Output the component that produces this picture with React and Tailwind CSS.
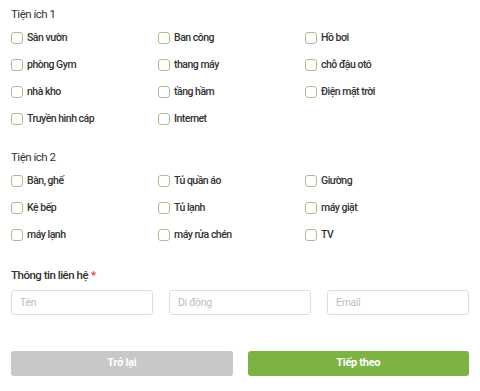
import React from 'react';

const GROUP_1 = [
  'Sân vườn', 'Ban công', 'Hồ bơi',
  'phòng Gym', 'thang máy', 'chỗ đậu otô',
  'nhà kho', 'tầng hầm', 'Điện mặt trời',
  'Truyền hình cáp', 'Internet',
];

const GROUP_2 = [
  'Bàn, ghế', 'Tủ quần áo', 'Giường',
  'Kệ bếp', 'Tủ lạnh', 'máy giặt',
  'máy lạnh', 'máy rửa chén', 'TV',
];

function Check({ label }) {
  return (
    <label className="h-[27px] flex items-center gap-[4px] cursor-pointer">
      <span className="w-[12px] h-[12px] rounded-[3px] border border-[#aebd8f] bg-white shrink-0" />
      <span className="text-[10.5px] text-[#333] font-medium tracking-[-0.5px]">{label}</span>
    </label>
  );
}

function Group({ title, items, className = '' }) {
  return (
    <div className={className}>
      <h3 className="h-[18px] flex items-center text-[11.5px] text-[#333] tracking-[-0.5px]">{title}</h3>
      <div className="grid grid-cols-[147px_147px_1fr]">
        {items.map(it => <Check key={it} label={it} />)}
      </div>
    </div>
  );
}

export default function App() {
  return (
    <div className="w-[480px] h-[391px] bg-white px-[11px] pt-[6px]" style={{ fontFamily: 'Roboto, "Noto Sans", sans-serif' }}>
      <Group title="Tiện ích 1" items={GROUP_1} />
      <Group title="Tiện ích 2" items={GROUP_2} className="mt-[17px]" />

      {/* contact */}
      <div className="mt-[19px]">
        <h3 className="h-[18px] flex items-center text-[11.5px] text-[#333] font-medium tracking-[-0.5px]">
          Thông tin liên hệ<span className="text-[#e53935] ml-[3px]">*</span>
        </h3>
        <div className="grid grid-cols-3 gap-4 mt-[5px]">
          {['Tên', 'Di động', 'Email'].map(p => (
            <input key={p} placeholder={p}
              className="h-[25px] rounded-[3px] border border-[#dcdcdc] px-[8px] text-[10.5px] tracking-[-0.3px] text-[#333] placeholder:text-[#bdbdbd] outline-none" />
          ))}
        </div>
      </div>

      <div className="grid grid-cols-2 gap-[15px] mt-[36px]">
        <button className="h-[25px] rounded-[3px] bg-[#c8c8c8] text-white text-[11px] font-bold tracking-[-0.3px]">Trở lại</button>
        <button className="h-[25px] rounded-[3px] bg-[#7cb342] text-white text-[11px] font-bold tracking-[-0.3px]">Tiếp theo</button>
      </div>
    </div>
  );
}
